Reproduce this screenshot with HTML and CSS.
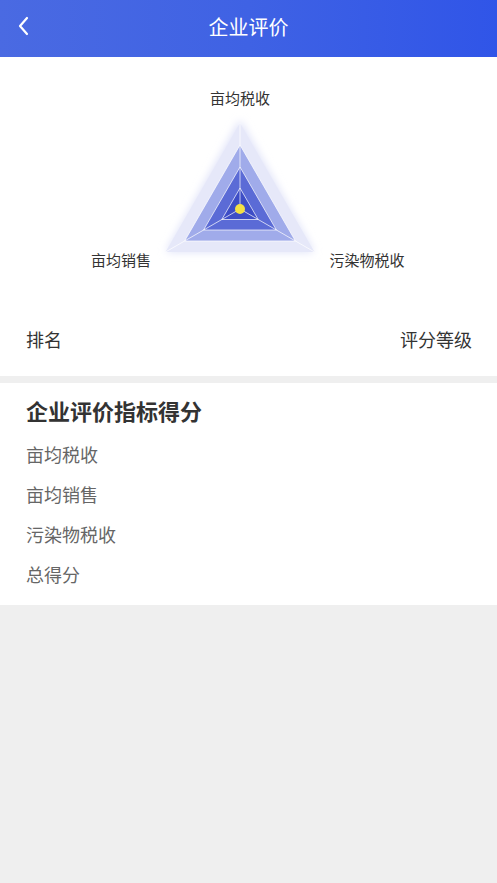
FILE: index.html
```html
<!DOCTYPE html>
<html>
<head>
    <title>企业评价</title>
    <meta charset="utf-8">
    <link rel="stylesheet" href="styles.css">
</head>
<body>

<div class="header">
    <span class="back">
        <svg width="14" height="20" viewBox="0 0 14 20">
            <polyline points="10,2 3,10 10,18" fill="none" stroke="#fff" stroke-width="2.2" stroke-linecap="round" stroke-linejoin="round"/>
        </svg>
    </span>
    <span class="title">企业评价</span>
</div>

<div class="card">
    <div class="chart">
        <svg width="497" height="250" viewBox="0 57 497 250">
            <defs>
                <filter id="glow" x="-30%" y="-30%" width="160%" height="160%">
                    <feGaussianBlur stdDeviation="4"/>
                </filter>
            </defs>
            <!-- glow behind outer ring -->
            <polygon points="240,120 166,252 314,252" fill="#dde0f8" filter="url(#glow)"/>
            <!-- rings, outside in -->
            <polygon points="240,123 165.5,252 314.5,252" fill="#e6e8f9"/>
            <polygon points="240,145 184.6,241 295.4,241" fill="#a0abea"/>
            <polygon points="240,167 203.6,230 276.4,230" fill="#5b6bd6"/>
            <polygon points="240,188 221.8,219.5 258.2,219.5" fill="#3d4dc6"/>
            <!-- ring borders -->
            <g fill="none" stroke="#ffffff" stroke-opacity="0.7" stroke-width="1">
                <polygon points="240,145 184.6,241 295.4,241"/>
                <polygon points="240,167 203.6,230 276.4,230"/>
                <polygon points="240,188 221.8,219.5 258.2,219.5"/>
                <line x1="240" y1="209" x2="240" y2="123"/>
                <line x1="240" y1="209" x2="165.5" y2="252"/>
                <line x1="240" y1="209" x2="314.5" y2="252"/>
            </g>
            <circle cx="240" cy="209" r="5" fill="#f3e044"/>
            <text x="240" y="104" class="axis" text-anchor="middle">亩均税收</text>
            <text x="121" y="266" class="axis" text-anchor="middle">亩均销售</text>
            <text x="367" y="266" class="axis" text-anchor="middle">污染物税收</text>
        </svg>
    </div>
    <div class="rank-row">
        <span>排名</span>
        <span>评分等级</span>
    </div>
</div>

<div class="card scores">
    <h2>企业评价指标得分</h2>
    <div class="item">亩均税收</div>
    <div class="item">亩均销售</div>
    <div class="item">污染物税收</div>
    <div class="item">总得分</div>
</div>

</body>
</html>
```

FILE: styles.css
```css
body {
    margin: 0;
    background-color: #efefef;
    font-family: "Noto Sans CJK SC", "Noto Sans", sans-serif;
    color: #333;
}

.header {
    height: 57px;
    display: flex;
    align-items: center;
    justify-content: center;
    position: relative;
    background: linear-gradient(90deg, #4a6ae2 0%, #3f62e4 50%, #3055e8 100%);
    color: #fff;
}

.header .back {
    position: absolute;
    left: 17px;
    top: 16px;
}

.header .title {
    font-size: 20px;
    margin-top: -4px;
}

.card {
    background-color: #fff;
}

.chart {
    height: 250px;
}

.chart svg {
    display: block;
}

.axis {
    font-size: 15px;
    fill: #333;
    font-family: "Noto Sans CJK SC", sans-serif;
}

.rank-row {
    display: flex;
    justify-content: space-between;
    padding: 20px 25px 24px 26px;
    font-size: 18px;
    line-height: 25px;
}

.scores {
    margin-top: 7px;
    padding: 11px 26px 11px;
}

.scores h2 {
    margin: 0 0 8px;
    font-size: 22px;
    line-height: 32px;
    font-weight: bold;
}

.item {
    font-size: 18px;
    line-height: 40px;
    color: #666;
}
```
